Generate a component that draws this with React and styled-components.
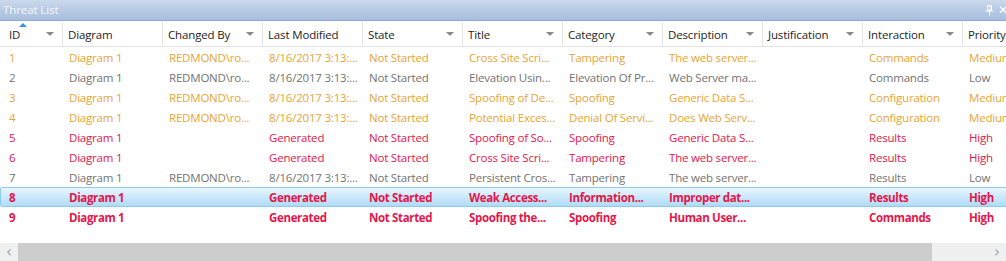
import React from 'react'
import styled, { createGlobalStyle } from 'styled-components'

const GlobalStyle = createGlobalStyle`
  html, body {
    margin: 0;
    padding: 0;
    background: #ffffff;
  }
  body {
    font-family: "Open Sans", "Noto Sans", sans-serif;
    font-size: 12px;
  }
`

const columns = [
  { name: 'ID', width: 63, filter: true, sorted: true },
  { name: 'Diagram', width: 100 },
  { name: 'Changed By', width: 100, filter: true },
  { name: 'Last Modified', width: 100 },
  { name: 'State', width: 100, filter: true },
  { name: 'Title', width: 100, filter: true },
  { name: 'Category', width: 100, filter: true },
  { name: 'Description', width: 100, filter: true },
  { name: 'Justification', width: 100, filter: true },
  { name: 'Interaction', width: 100, filter: true },
  { name: 'Priority', width: 100 },
]

const colors = {
  orange: '#e8a435',
  gray: '#737373',
  red: '#e5164b',
}

const rows = [
  { tone: 'orange', cells: ['1', 'Diagram 1', 'REDMOND\\ro...', '8/16/2017 3:13:...', 'Not Started', 'Cross Site Scri...', 'Tampering', 'The web server...', '', 'Commands', 'Medium'] },
  { tone: 'gray', cells: ['2', 'Diagram 1', 'REDMOND\\ro...', '8/16/2017 3:13:...', 'Not Started', 'Elevation Usin...', 'Elevation Of Pr...', 'Web Server ma...', '', 'Commands', 'Low'] },
  { tone: 'orange', cells: ['3', 'Diagram 1', 'REDMOND\\ro...', '8/16/2017 3:13:...', 'Not Started', 'Spoofing of De...', 'Spoofing', 'Generic Data S...', '', 'Configuration', 'Medium'] },
  { tone: 'orange', cells: ['4', 'Diagram 1', 'REDMOND\\ro...', '8/16/2017 3:13:...', 'Not Started', 'Potential Exces...', 'Denial Of Servi...', 'Does Web Serv...', '', 'Configuration', 'Medium'] },
  { tone: 'red', cells: ['5', 'Diagram 1', '', 'Generated', 'Not Started', 'Spoofing of So...', 'Spoofing', 'Generic Data S...', '', 'Results', 'High'] },
  { tone: 'red', cells: ['6', 'Diagram 1', '', 'Generated', 'Not Started', 'Cross Site Scri...', 'Tampering', 'The web server...', '', 'Results', 'High'] },
  { tone: 'gray', cells: ['7', 'Diagram 1', 'REDMOND\\ro...', '8/16/2017 3:13:...', 'Not Started', 'Persistent Cros...', 'Tampering', 'The web server...', '', 'Results', 'Low'] },
  { tone: 'red', bold: true, selected: true, cells: ['8', 'Diagram 1', '', 'Generated', 'Not Started', 'Weak Access...', 'Information...', 'Improper dat...', '', 'Results', 'High'] },
  { tone: 'red', bold: true, cells: ['9', 'Diagram 1', '', 'Generated', 'Not Started', 'Spoofing the...', 'Spoofing', 'Human User...', '', 'Commands', 'High'] },
]

function PinIcon() {
  return (
    <svg width="9" height="11" viewBox="0 0 9 11">
      <path d="M2.5 0.5 H6.5 V5.5 H2.5 Z" fill="none" stroke="#ffffff" strokeWidth="1" />
      <path d="M5 1 V5" stroke="#ffffff" strokeWidth="1" />
      <path d="M0.5 6 H8.5" stroke="#ffffff" strokeWidth="1" />
      <path d="M4.5 6 V10.5" stroke="#ffffff" strokeWidth="1" />
    </svg>
  )
}

function App() {
  return (
    <Panel>
      <GlobalStyle />
      <TitleBar>
        <TitleText>Threat List</TitleText>
        <TitleButtons>
          <PinIcon />
          <CloseGlyph>✕</CloseGlyph>
        </TitleButtons>
      </TitleBar>
      <Grid>
        <HeaderRow>
          {columns.map((col) => (
            <HeaderCell key={col.name} $width={col.width}>
              {col.sorted && <SortArrow />}
              <HeaderLabel>{col.name}</HeaderLabel>
              {col.filter && <FilterArrow />}
            </HeaderCell>
          ))}
        </HeaderRow>
        {rows.map((row) => (
          <Row key={row.cells[0]} $selected={row.selected}>
            {row.cells.map((text, i) => (
              <Cell
                key={i}
                $width={columns[i].width}
                $color={colors[row.tone]}
                $bold={row.bold}
              >
                {text}
              </Cell>
            ))}
          </Row>
        ))}
      </Grid>
      <Spacer />
      <ScrollBar>
        <ScrollButton>‹</ScrollButton>
        <ScrollThumb />
        <ScrollButton $wide>›</ScrollButton>
      </ScrollBar>
    </Panel>
  )
}

const Panel = styled.div`
  width: 1006px;
  height: 261px;
  display: flex;
  flex-direction: column;
  overflow: hidden;
  background: #ffffff;
`
const TitleBar = styled.div`
  height: 20px;
  flex-shrink: 0;
  display: flex;
  align-items: center;
  justify-content: space-between;
  padding: 0 0 0 3px;
  background: linear-gradient(to bottom, #cbd9ec 0%, #b7cae4 50%, #a9bfdd 100%);
  border-bottom: 1px solid #8aaad6;
`
const TitleText = styled.span`
  color: #f4f7fb;
  font-size: 11.5px;
  letter-spacing: -0.1px;
  line-height: 20px;
`
const TitleButtons = styled.div`
  display: flex;
  align-items: center;
  gap: 4px;
  margin-right: -2px;
`
const CloseGlyph = styled.span`
  color: #ffffff;
  font-size: 12px;
  font-family: "DejaVu Sans", sans-serif;
  line-height: 20px;
`
const Grid = styled.div`
  display: flex;
  flex-direction: column;
  width: 1063px;
`
const HeaderRow = styled.div`
  display: flex;
  height: 24px;
  margin-top: 1px;
  border-bottom: 1px solid #e3e3e3;
`
const HeaderCell = styled.div`
  position: relative;
  width: ${(p) => p.$width}px;
  flex-shrink: 0;
  display: flex;
  align-items: center;
  justify-content: space-between;
  padding: 0 8px 0 9px;
  box-sizing: border-box;
  border-right: 1px solid #e5e5e5;
  &:not(:first-child) {
    padding-left: 5px;
  }
`
const HeaderLabel = styled.span`
  color: #1e1e1e;
  font-size: 11.5px;
  letter-spacing: -0.15px;
  white-space: nowrap;
`
const FilterArrow = styled.span`
  width: 0;
  height: 0;
  border-left: 4px solid transparent;
  border-right: 4px solid transparent;
  border-top: 4px solid #8a8a8a;
`
const SortArrow = styled.span`
  position: absolute;
  left: 19px;
  top: 1px;
  width: 0;
  height: 0;
  border-left: 4px solid transparent;
  border-right: 4px solid transparent;
  border-bottom: 4px solid #3d8ee0;
`
const Row = styled.div`
  display: flex;
  height: 20px;
  box-sizing: border-box;
  align-items: center;
  border: 1px solid ${(p) => (p.$selected ? '#8ecbf0' : 'transparent')};
  border-radius: 2px;
  background: ${(p) =>
    p.$selected ? 'linear-gradient(to bottom, #e9f6fd 0%, #cdeafb 45%, #b0dbf6 100%)' : 'transparent'};
`
const Cell = styled.div`
  width: ${(p) => p.$width}px;
  flex-shrink: 0;
  box-sizing: border-box;
  padding-left: 5px;
  &:first-child {
    padding-left: 8px;
  }
  color: ${(p) => p.$color};
  font-weight: ${(p) => (p.$bold ? 700 : 400)};
  font-size: 11.5px;
  letter-spacing: ${(p) => (p.$bold ? '-0.35px' : '-0.2px')};
  white-space: nowrap;
  overflow: hidden;
`
const Spacer = styled.div`
  flex: 1;
`
const ScrollBar = styled.div`
  height: 18px;
  flex-shrink: 0;
  display: flex;
  background: #f0f0f0;
`
const ScrollButton = styled.div`
  width: ${(p) => (p.$wide ? '74px' : '18px')};
  display: flex;
  align-items: center;
  justify-content: ${(p) => (p.$wide ? 'flex-end' : 'center')};
  padding-right: ${(p) => (p.$wide ? '6px' : '0')};
  box-sizing: border-box;
  color: #a0a0a0;
  font-size: 15px;
  font-family: "DejaVu Sans", sans-serif;
`
const ScrollThumb = styled.div`
  flex: 1;
  background: #cdcdcd;
`

export default App
